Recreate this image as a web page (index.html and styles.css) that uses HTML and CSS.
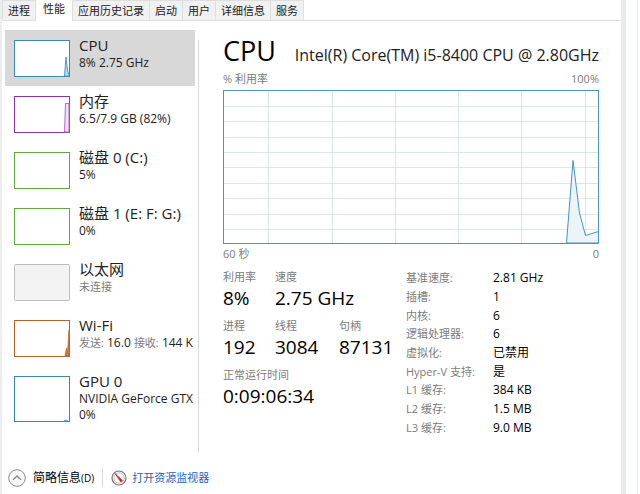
FILE: index.html
```html
<!DOCTYPE html>
<html lang="zh-CN">
<head>
  <meta charset="UTF-8" />
  <meta name="viewport" content="width=device-width, initial-scale=1.0"/>
  <title>任务管理器</title>
  <link rel="stylesheet" href="styles.css">
</head>
<body>

<div class="window">
  <nav class="tabs">
    <button class="tab">进程</button>
    <button class="tab active">性能</button>
    <button class="tab">应用历史记录</button>
    <button class="tab">启动</button>
    <button class="tab">用户</button>
    <button class="tab">详细信息</button>
    <button class="tab">服务</button>
  </nav>

  <div class="content">
    <aside class="sidebar">
      <button class="item selected">
        <svg class="thumb" viewBox="0 0 56 37">
          <rect x="0.5" y="0.5" width="55" height="36" fill="#fff" stroke="#3a87b7"/>
          <path d="M50.5 36 L52 17 L53.5 30 L55 35 V36Z" fill="#b9dcef" stroke="#4a9ccb"/>
        </svg>
        <span class="info">
          <span class="name">CPU</span>
          <span class="line">8% 2.75 GHz</span>
        </span>
      </button>
      <button class="item">
        <svg class="thumb" viewBox="0 0 56 37">
          <rect x="0.5" y="0.5" width="55" height="36" fill="#fff" stroke="#8b35a5"/>
          <path d="M50.5 36 L51.5 7.5 H55 V36Z" fill="#f1e0f6" stroke="#b06cc6"/>
        </svg>
        <span class="info">
          <span class="name">内存</span>
          <span class="line">6.5/7.9 GB (82%)</span>
        </span>
      </button>
      <button class="item">
        <svg class="thumb" viewBox="0 0 56 37">
          <rect x="0.5" y="0.5" width="55" height="36" fill="#fff" stroke="#63a83c"/>
        </svg>
        <span class="info">
          <span class="name">磁盘 0 (C:)</span>
          <span class="line">5%</span>
        </span>
      </button>
      <button class="item">
        <svg class="thumb" viewBox="0 0 56 37">
          <rect x="0.5" y="0.5" width="55" height="36" fill="#fff" stroke="#63a83c"/>
        </svg>
        <span class="info">
          <span class="name">磁盘 1 (E: F: G:)</span>
          <span class="line">0%</span>
        </span>
      </button>
      <button class="item">
        <svg class="thumb" viewBox="0 0 56 37">
          <rect x="0.5" y="0.5" width="55" height="36" rx="1" fill="#f4f3f4" stroke="#bdbdbd"/>
        </svg>
        <span class="info">
          <span class="name">以太网</span>
          <span class="line muted">未连接</span>
        </span>
      </button>
      <button class="item">
        <svg class="thumb" viewBox="0 0 56 37">
          <rect x="0.5" y="0.5" width="55" height="36" fill="#fff" stroke="#b4622a"/>
          <path d="M51 36 L52.5 28 L53.5 33 L55 10 V36Z" fill="#c9783f" stroke="#c26c31" stroke-width="0.8"/>
        </svg>
        <span class="info">
          <span class="name">Wi-Fi</span>
          <span class="line"><span class="muted">发送:</span> 16.0 <span class="muted">接收:</span> 144 K</span>
        </span>
      </button>
      <button class="item">
        <svg class="thumb tall" viewBox="0 0 56 46">
          <rect x="0.5" y="0.5" width="55" height="45" fill="#fff" stroke="#3a87b7"/>
          <path d="M50 45 L52 44 L54 45" fill="none" stroke="#4a9ccb"/>
        </svg>
        <span class="info">
          <span class="name">GPU 0</span>
          <span class="line">NVIDIA GeForce GTX</span>
          <span class="line">0%</span>
        </span>
      </button>
    </aside>

    <main class="detail">
      <header class="title">
        <h1>CPU</h1>
        <h2>Intel(R) Core(TM) i5-8400 CPU @ 2.80GHz</h2>
      </header>

      <div class="scale"><span>% 利用率</span><span>100%</span></div>
      <svg class="chart" viewBox="0 0 376 154" preserveAspectRatio="none">
        <path class="grid" d="M0 16.5H376 M0 31.5H376 M0 47.5H376 M0 62.5H376 M0 77.5H376 M0 93.5H376 M0 108.5H376 M0 124.5H376 M0 139.5H376"/>
        <path class="grid" d="M45.5 0V154 M109.5 0V154 M172.5 0V154 M235.5 0V154 M298.5 0V154 M362.5 0V154"/>
        <path class="usage" d="M343.5 153 L350 70.5 L356.5 123 L362.5 145.5 L375.5 141.5 V153Z"/>
        <rect class="frame" x="0.5" y="0.5" width="375" height="153"/>
      </svg>
      <div class="scale below"><span>60 秒</span><span>0</span></div>

      <div class="stats">
        <dl class="counters">
          <div><dt>利用率</dt><dd>8%</dd></div>
          <div class="wide"><dt>速度</dt><dd>2.75 GHz</dd></div>
          <div><dt>进程</dt><dd>192</dd></div>
          <div><dt>线程</dt><dd>3084</dd></div>
          <div><dt>句柄</dt><dd>87131</dd></div>
          <div class="full"><dt>正常运行时间</dt><dd>0:09:06:34</dd></div>
        </dl>
        <table class="specs">
          <tr><th scope="row">基准速度:</th><td>2.81 GHz</td></tr>
          <tr><th scope="row">插槽:</th><td>1</td></tr>
          <tr><th scope="row">内核:</th><td>6</td></tr>
          <tr><th scope="row">逻辑处理器:</th><td>6</td></tr>
          <tr><th scope="row">虚拟化:</th><td>已禁用</td></tr>
          <tr><th scope="row">Hyper-V 支持:</th><td>是</td></tr>
          <tr><th scope="row">L1 缓存:</th><td>384 KB</td></tr>
          <tr><th scope="row">L2 缓存:</th><td>1.5 MB</td></tr>
          <tr><th scope="row">L3 缓存:</th><td>9.0 MB</td></tr>
        </table>
      </div>
    </main>
  </div>

  <footer class="footer">
    <button class="fewer">
      <svg width="18" height="18" viewBox="0 0 18 18" fill="none">
        <circle cx="9" cy="9" r="8.3" fill="#fafafa" stroke="#8c8c8c"/>
        <path d="M5 10.8 L9 7 L13 10.8" stroke="#8c8c8c" stroke-width="1.5"/>
      </svg>
      <span>简略信息<small>(D)</small></span>
    </button>
    <a class="monitor" href="#">
      <svg width="16" height="16" viewBox="0 0 16 16">
        <circle cx="8" cy="8" r="7" fill="#fff" stroke="#77716c" stroke-width="1.2"/>
        <circle cx="8" cy="8" r="5.2" fill="#fbfaf8" stroke="#b9b3ad" stroke-width="0.8"/>
        <path d="M4 3.5 L11.5 10.5 L9.8 12Z" fill="#d8202a" stroke="#d8202a" stroke-width="0.7"/>
      </svg>
      <span>打开资源监视器</span>
    </a>
  </footer>
</div>

</body>
</html>
```
FILE: styles.css
```css
* { box-sizing: border-box; }

body {
  margin: 0;
  display: flex;
  min-height: 100vh;
  padding-right: 2px;
  background: linear-gradient(to left, #fff 2px, #edf0f0 2px, #edf0f0 3px, #fdfefe 3px);
  font-family: "Open Sans", "Noto Sans CJK SC", sans-serif;
  font-size: 11px;
  line-height: 16px;
  color: #222;
}

button {
  font: inherit;
  color: inherit;
  border: none;
  background: none;
  padding: 0;
  text-align: left;
}

.window {
  flex: 1;
  min-width: 0;
  display: flex;
  flex-direction: column;
  margin-right: 12px;
  background: #fff;
  border-left: 2px solid #eceeee;
  border-right: 5px solid #e8ebeb;
}

.tabs {
  display: flex;
  height: 21px;
  border-bottom: 1px solid #dfdfdf;
}

.tab {
  height: 20px;
  padding: 0 5px;
  background: #f1f1f1;
  border: 1px solid #dedede;
  border-width: 1px 1px 0 0;
  white-space: nowrap;
}

.tab:first-child {
  border-left-width: 1px;
}

.tab.active {
  height: 21px;
  padding: 0 7px 4px;
  background: #fff;
  border-top-color: #fff;
}

.content {
  display: flex;
  padding: 9px 22px 0 3px;
}

.sidebar {
  width: 193px;
  flex: none;
  display: flex;
  flex-direction: column;
  overflow: hidden;
}

.item {
  display: flex;
  align-items: flex-start;
  gap: 9px;
  min-height: 56px;
  padding: 10px 0 0 9px;
  margin-right: 3px;
  white-space: nowrap;
}

.item.selected {
  background: #d8d8d8;
}

.thumb {
  width: 56px;
  height: 37px;
  flex: none;
}

.thumb.tall {
  height: 46px;
}

.info {
  display: flex;
  flex-direction: column;
  margin-top: -5px;
}

.name {
  font-size: 15px;
  line-height: 20px;
}

.line {
  font-size: 12px;
  line-height: 16px;
}

.muted {
  font-size: 11px;
  color: #7c7c7c;
}

.detail {
  flex: 1;
  min-width: 0;
  margin-top: 10px;
  padding-left: 24px;
  border-left: 1px solid #d8d8d8;
  min-height: 412px;
}

.title {
  display: flex;
  justify-content: space-between;
  align-items: baseline;
  height: 31px;
  white-space: nowrap;
}

h1, h2 {
  margin: 0;
  font-weight: normal;
}

h1 {
  font-size: 27px;
  line-height: 22px;
  color: #000;
}

h2 {
  font-size: 16px;
  line-height: 22px;
}

.scale {
  display: flex;
  justify-content: space-between;
  height: 19px;
  color: #7c7c7c;
}

.scale.below {
  height: 25px;
  padding-top: 2px;
}

.chart {
  display: block;
  width: 100%;
  height: 154px;
}

.grid {
  fill: none;
  stroke: #d9e7ef;
}

.usage {
  fill: #edf4f9;
  stroke: #4792c4;
}

.frame {
  fill: none;
  stroke: #4a93c3;
}

.stats {
  display: flex;
}

.counters {
  display: grid;
  grid-template-columns: 52px 64px 67px;
  align-content: start;
  row-gap: 7px;
  margin: 0;
  white-space: nowrap;
}

.wide {
  grid-column: span 2;
}

.full {
  grid-column: span 3;
}

dt {
  color: #7c7c7c;
}

dd {
  margin: 0;
  font-size: 19px;
  line-height: 26px;
  color: #000;
}

.specs {
  height: 168px;
  border-collapse: collapse;
  white-space: nowrap;
  color: #000;
}

.specs th,
.specs td {
  padding: 0;
  line-height: 16px;
}

.specs th {
  width: 87px;
  font-weight: normal;
  text-align: left;
  color: #7c7c7c;
}

.specs td {
  font-size: 12px;
}

.footer {
  display: flex;
  align-items: center;
  padding: 17px 6px 6px;
}

.fewer {
  display: flex;
  align-items: center;
  gap: 7px;
  padding-right: 8px;
  border-right: 1px solid #d8d8d8;
  font-size: 12px;
  color: #000;
}

.fewer small {
  font-size: 10px;
}

.monitor {
  display: flex;
  align-items: center;
  gap: 5px;
  padding-left: 8px;
  color: #1467c6;
  text-decoration: none;
}
```
